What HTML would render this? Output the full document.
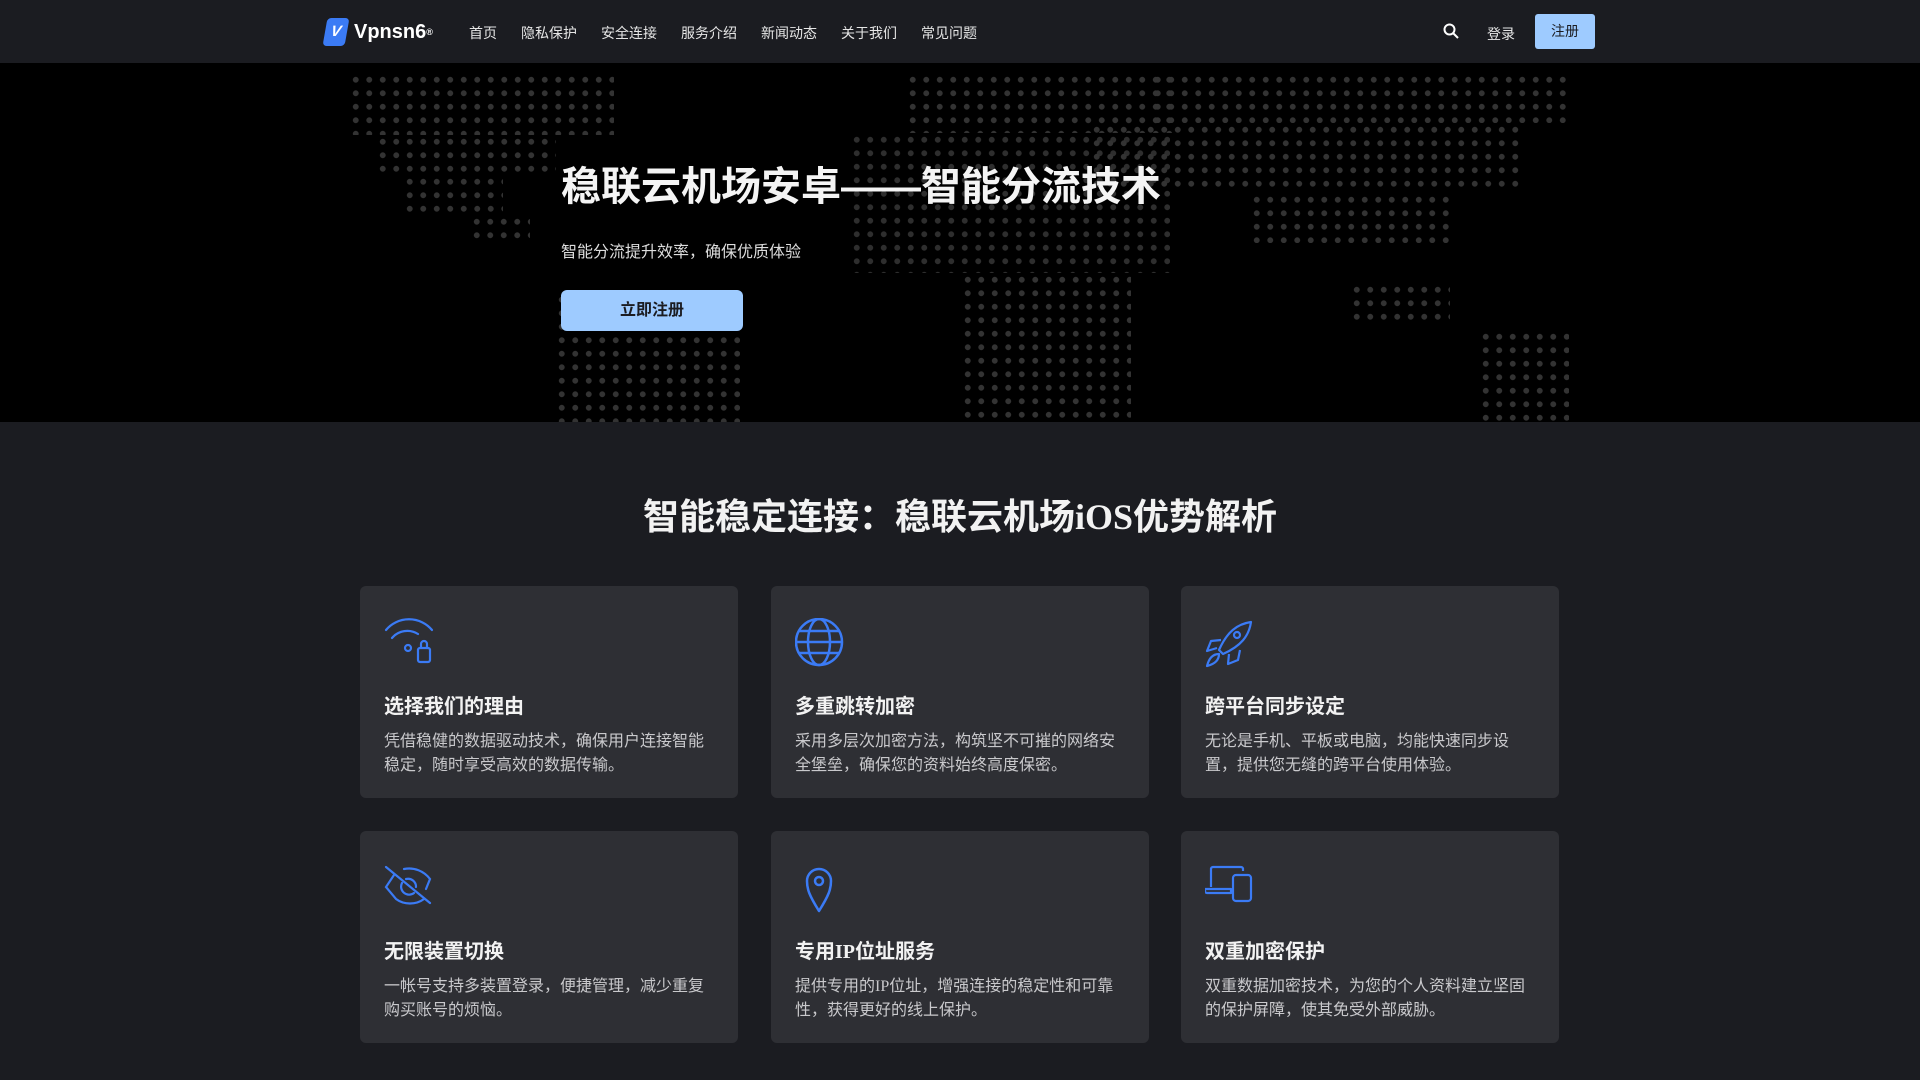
<!DOCTYPE html>
<html><head><meta charset="utf-8"><style>
*{margin:0;padding:0;box-sizing:border-box}
body{width:1920px;height:1080px;background:#1b1c21;font-family:"Liberation Sans","Noto Sans CJK SC",sans-serif;color:#fff;overflow:hidden;position:relative}
.nav{position:absolute;left:0;top:0;width:1920px;height:63px;background:#1b1c21}
.logo{position:absolute;left:325px;top:18px;display:flex;align-items:center;font-weight:bold;font-size:20px}
.logo .v{width:22px;height:28px;background:#3b7bf5;border-radius:4px;transform:skewX(-10deg);margin-right:7px;font-size:15px;text-align:center;line-height:28px;font-style:italic}
.menu{position:absolute;left:469px;top:23px;font-size:14px;color:#e6e6e6}
.menu span{margin-right:24px}
.login{position:absolute;left:1487px;top:24px;font-size:14px;color:#e6e6e6}
.reg{position:absolute;left:1535px;top:14px;width:60px;height:35px;background:#9ecbff;border-radius:3px;color:#1b1c21;font-size:14px;text-align:center;line-height:35px}
.hero{position:absolute;left:0;top:63px;width:1920px;height:359px;background:#000;overflow:hidden}
.d{position:absolute;background-image:radial-gradient(circle,#333 2.6px,transparent 3.2px);background-size:13.5px 13.5px}
h1{position:absolute;left:561px;font-size:40px;font-weight:bold;color:#f4f4f4}
.sub{position:absolute;left:561px;font-size:16px;color:#ddd}
.btn{position:absolute;left:561px;width:182px;height:41px;background:#9ecbff;border-radius:6px;color:#1b1c21;font-weight:bold;font-size:16px;text-align:center;line-height:41px}
h2{position:absolute;left:0;width:1920px;top:488px;text-align:center;font-size:36px;font-weight:bold;color:#f2f2f2}
i{font-style:normal;font-family:"Liberation Serif",serif}
.card{position:absolute;width:378px;height:212px;background:#2e2f34;border-radius:6px}
.card svg{position:absolute;left:24px;top:32px}
.card h3{position:absolute;left:24px;top:104px;font-size:20px;font-weight:bold;color:#f2f2f2}
.card p{position:absolute;left:24px;top:144px;width:335px;font-size:16px;line-height:24px;color:#c9c9cc}
</style></head><body>
<div class="nav">
 <div class="logo"><div class="v">V</div>Vpnsn6<sup style="font-size:9px">®</sup></div>
 <div class="menu"><span>首页</span><span>隐私保护</span><span>安全连接</span><span>服务介绍</span><span>新闻动态</span><span>关于我们</span><span>常见问题</span></div>
 <svg style="position:absolute;left:1443px;top:23px" width="16" height="16" viewBox="0 0 16 16" fill="none" stroke="#fff" stroke-width="2"><circle cx="6.5" cy="6.5" r="5"/><path d="M10.5 10.5L15 15"/></svg>
 <div class="login">登录</div>
 <div class="reg">注册</div>
</div>
<div class="hero">
 <div class="d" style="left:349px;top:10px;width:265px;height:62px"></div>
 <div class="d" style="left:376px;top:72px;width:180px;height:40px"></div>
 <div class="d" style="left:403px;top:112px;width:100px;height:40px"></div>
 <div class="d" style="left:470px;top:152px;width:60px;height:30px"></div>
 <div class="d" style="left:555px;top:230px;width:185px;height:130px"></div>
 <div class="d" style="left:906px;top:10px;width:270px;height:60px"></div>
 <div class="d" style="left:850px;top:70px;width:320px;height:140px;opacity:.9"></div>
 <div class="d" style="left:961px;top:210px;width:170px;height:150px"></div>
 <div class="d" style="left:1151px;top:10px;width:415px;height:50px"></div>
 <div class="d" style="left:1090px;top:60px;width:430px;height:70px"></div>
 <div class="d" style="left:1250px;top:130px;width:200px;height:50px"></div>
 <div class="d" style="left:1350px;top:220px;width:100px;height:40px"></div>
 <div class="d" style="left:1479px;top:267px;width:90px;height:92px"></div>
 <h1 style="top:91px">稳联云机场安卓——智能分流技术</h1>
 <div class="sub" style="top:175px">智能分流提升效率，确保优质体验</div>
 <div class="btn" style="top:227px">立即注册</div>
</div>
<h2>智能稳定连接：稳联云机场<i>iOS</i>优势解析</h2>

<div class="card" style="left:360px;top:586px">
 <svg width="52" height="52" viewBox="0 0 52 52" fill="none" stroke="#3b7bf5" stroke-width="2.2" stroke-linecap="round"><path d="M2 12a30 30 0 0 1 46 0"/><path d="M8 20a20 20 0 0 1 26-4"/><circle cx="24" cy="30" r="3"/><rect x="34" y="30" width="12" height="14" rx="2"/><path d="M37 30v-4a3 3 0 0 1 6 0v4"/></svg>
 <h3>选择我们的理由</h3>
 <p>凭借稳健的数据驱动技术，确保用户连接智能稳定，随时享受高效的数据传输。</p>
</div>
<div class="card" style="left:771px;top:586px">
 <svg width="52" height="52" viewBox="0 0 52 52" fill="none" stroke="#3b7bf5" stroke-width="2.5"><circle cx="24" cy="24" r="23"/><ellipse cx="24" cy="24" rx="11" ry="23"/><path d="M1 24h46M4 13h40M4 35h40"/></svg>
 <h3>多重跳转加密</h3>
 <p>采用多层次加密方法，构筑坚不可摧的网络安全堡垒，确保您的资料始终高度保密。</p>
</div>
<div class="card" style="left:1181px;top:586px">
 <svg width="52" height="52" viewBox="0 0 52 52" fill="none" stroke="#3b7bf5" stroke-width="2.2" stroke-linejoin="round"><path d="M14 32C22 14 32 6 46 4c-2 14-10 24-28 32z"/><circle cx="32" cy="17" r="3"/><path d="M16 22l-10 1-4 10 10-3"/><path d="M24 36l-1 10 10-4 2-10"/><path d="M14 36c-6 0-10 4-12 12 8-2 12-6 12-12z"/></svg>
 <h3>跨平台同步设定</h3>
 <p>无论是手机、平板或电脑，均能快速同步设置，提供您无缝的跨平台使用体验。</p>
</div>
<div class="card" style="left:360px;top:831px">
 <svg width="52" height="52" viewBox="0 0 52 52" fill="none" stroke="#3b7bf5" stroke-width="2.2" stroke-linecap="round"><path d="M2 4l44 36"/><path d="M10 12l-8 12 10 12c8 6 20 6 28 0"/><path d="M20 6c10-2 20 2 26 10l-4 10"/><path d="M18 20a8 8 0 0 0 12 10"/><path d="M22 16a8 8 0 0 1 10 8"/></svg>
 <h3>无限装置切换</h3>
 <p>一帐号支持多装置登录，便捷管理，减少重复购买账号的烦恼。</p>
</div>
<div class="card" style="left:771px;top:831px">
 <svg width="52" height="52" viewBox="0 0 52 52" fill="none" stroke="#3b7bf5" stroke-width="2.5" stroke-linejoin="round"><path d="M24 48C14 32 12 26 12 18a12 12 0 0 1 24 0c0 8-2 14-12 30z"/><circle cx="24" cy="18" r="4"/></svg>
 <h3>专用<i>IP</i>位址服务</h3>
 <p>提供专用的<i>IP</i>位址，增强连接的稳定性和可靠性，获得更好的线上保护。</p>
</div>
<div class="card" style="left:1181px;top:831px">
 <svg width="52" height="52" viewBox="0 0 52 52" fill="none" stroke="#3b7bf5" stroke-width="2.2" stroke-linejoin="round"><path d="M6 24V6a2 2 0 0 1 2-2h28a2 2 0 0 1 2 2v2"/><path d="M0 26h26v4H2a2 2 0 0 1-2-2z"/><rect x="28" y="12" width="18" height="26" rx="3"/></svg>
 <h3>双重加密保护</h3>
 <p>双重数据加密技术，为您的个人资料建立坚固的保护屏障，使其免受外部威胁。</p>
</div>
</body></html>
